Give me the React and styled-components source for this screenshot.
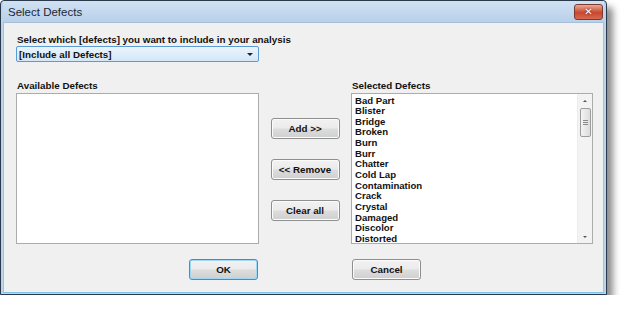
import styled, { createGlobalStyle } from "styled-components";

const GlobalStyle = createGlobalStyle`
  body {
    margin: 0;
    background: #ffffff;
    font-family: "Liberation Sans", Arial, sans-serif;
  }
`;

const Window = styled.div`
  width: 607px;
  height: 295px;
  border: 1px solid #2b3a4a;
  border-radius: 4px 4px 0 0;
  background: #bcd4ec;
  box-shadow: 6px 7px 7px rgba(0, 0, 0, 0.45);
  display: flex;
  flex-direction: column;
  padding: 0 2px 1px 2px;
  box-sizing: border-box;
`;

const TitleBar = styled.div`
  height: 21px;
  display: flex;
  align-items: center;
  justify-content: space-between;
  padding: 0 1px 0 5px;
  background: linear-gradient(#d0e1f3, #b9d0ea);
`;

const Title = styled.span`
  font-family: "Liberation Sans", sans-serif;
  font-size: 11.5px;
  color: #1b2736;
`;

const CloseButton = styled.div`
  width: 27px;
  height: 14px;
  border: 1px solid #7a3a2e;
  border-radius: 3px;
  background: linear-gradient(#eaa998, #c9472f 55%, #d66a50);
  display: flex;
  align-items: center;
  justify-content: center;
  color: #ffffff;
  font-family: "DejaVu Sans", sans-serif;
  font-weight: bold;
  font-size: 10px;
  line-height: 1;
  text-shadow: 0 0 2px #5a1a10;
`;

const Client = styled.div`
  flex: 1;
  background: #f0f0f0;
  border: 1px solid #a8bfd8;
  border-bottom-color: #7fc4e6;
  padding: 11px 10px 0 12px;
  display: grid;
  grid-template-columns: 243px 92px 242px;
  align-content: start;
`;

const Label = styled.div`
  font-family: "Liberation Sans", Arial, sans-serif;
  font-weight: bold;
  font-size: 9.8px;
  color: #111;
  line-height: 11px;
  margin-left: ${(p) => p.$indent || 0}px;
`;

const Heading = styled(Label)`
  grid-column: 1 / 4;
`;

const Combo = styled.div`
  grid-column: 1 / 2;
  margin-top: 1px;
  height: 16px;
  border: 1px solid #5a9bd5;
  border-radius: 2px;
  background: linear-gradient(#eaf4fc, #d4e7f8);
  display: flex;
  align-items: center;
  justify-content: space-between;
  padding: 0 5px 0 2px;
  box-sizing: border-box;
`;

const ComboText = styled.span`
  font-family: "Liberation Sans", Arial, sans-serif;
  font-weight: bold;
  font-size: 9.8px;
  color: #111;
`;

const Arrow = styled.span`
  width: 0;
  height: 0;
  border-left: 3px solid transparent;
  border-right: 3px solid transparent;
  border-top: 3px solid #222;
`;

const ListLabelRow = styled.div`
  grid-column: 1 / 4;
  display: grid;
  grid-template-columns: 335px 1fr;
  margin-top: 18px;
  margin-bottom: 2px;
`;

const ListBox = styled.div`
  height: 151px;
  border: 1px solid #acacac;
  background: #ffffff;
  box-sizing: border-box;
  display: flex;
`;

const Items = styled.div`
  flex: 1;
  padding: 1.5px 3px 0 3px;
  overflow: hidden;
`;

const Item = styled.div`
  font-family: "Liberation Sans", Arial, sans-serif;
  font-weight: bold;
  font-size: 9.6px;
  line-height: 10.65px;
  color: #111;
`;

const ScrollBar = styled.div`
  width: 14px;
  display: flex;
  flex-direction: column;
  align-items: center;
  background: #f3f3f3;
  border-left: 1px solid #ececec;
`;

const ScrollArrow = styled.div`
  height: 13px;
  display: flex;
  align-items: center;
  justify-content: center;
  &::after {
    content: "";
    border-left: 2px solid transparent;
    border-right: 2px solid transparent;
    ${(p) =>
      p.$up ? "border-bottom: 2px solid #555;" : "border-top: 2px solid #555;"}
  }
`;

const Thumb = styled.div`
  width: 11px;
  height: 29px;
  margin-top: 1px;
  border: 1px solid #9c9c9c;
  border-radius: 2px;
  background: linear-gradient(90deg, #f4f4f4, #dcdcdc);
  box-sizing: border-box;
  display: flex;
  flex-direction: column;
  align-items: center;
  justify-content: center;
  gap: 1px;
`;

const Grip = styled.span`
  width: 5px;
  height: 1px;
  background: #8a8a8a;
`;

const Spacer = styled.div`
  flex: 1;
`;

const Middle = styled.div`
  display: flex;
  flex-direction: column;
  align-items: center;
  padding-top: 25px;
  gap: 20px;
`;

const Button = styled.div`
  width: 69px;
  height: 21px;
  border: 1px solid ${(p) => (p.$default ? "#3c8fd0" : "#8e8f8f")};
  border-radius: 3px;
  background: linear-gradient(#f2f2f2 0%, #ebebeb 48%, #dddddd 52%, #cfcfcf 100%);
  box-shadow: inset 0 0 0 1px ${(p) => (p.$default ? "#9ed8f6" : "#fbfbfb")};
  box-sizing: border-box;
  display: flex;
  align-items: center;
  justify-content: center;
  font-family: "Liberation Sans", Arial, sans-serif;
  font-weight: bold;
  font-size: 9.8px;
  color: #111;
`;

const Footer = styled.div`
  grid-column: 1 / 4;
  display: grid;
  grid-template-columns: 335px 1fr;
  margin-top: 15px;
`;

const FooterCell = styled.div`
  display: flex;
  justify-content: ${(p) => p.$justify || "flex-start"};
  padding-left: ${(p) => p.$pad || 0}px;
  padding-right: ${(p) => p.$padRight || 0}px;
`;

const selected = [
  "Bad Part",
  "Blister",
  "Bridge",
  "Broken",
  "Burn",
  "Burr",
  "Chatter",
  "Cold Lap",
  "Contamination",
  "Crack",
  "Crystal",
  "Damaged",
  "Discolor",
  "Distorted",
];

export default function App() {
  return (
    <>
      <GlobalStyle />
      <Window>
        <TitleBar>
          <Title>Select Defects</Title>
          <CloseButton>✕</CloseButton>
        </TitleBar>
        <Client>
          <Heading $indent={1}>
            Select which [defects] you want to include in your analysis
          </Heading>
          <Combo>
            <ComboText>[Include all Defects]</ComboText>
            <Arrow />
          </Combo>
          <ListLabelRow>
            <Label $indent={1}>Available Defects</Label>
            <Label $indent={1}>Selected Defects</Label>
          </ListLabelRow>
          <ListBox />
          <Middle>
            <Button>Add &gt;&gt;</Button>
            <Button>&lt;&lt; Remove</Button>
            <Button>Clear all</Button>
          </Middle>
          <ListBox>
            <Items>
              {selected.map((name) => (
                <Item key={name}>{name}</Item>
              ))}
            </Items>
            <ScrollBar>
              <ScrollArrow $up />
              <Thumb>
                <Grip />
                <Grip />
                <Grip />
              </Thumb>
              <Spacer />
              <ScrollArrow />
            </ScrollBar>
          </ListBox>
          <Footer>
            <FooterCell $justify="flex-end" $padRight={93}>
              <Button $default>OK</Button>
            </FooterCell>
            <FooterCell $pad={1}>
              <Button>Cancel</Button>
            </FooterCell>
          </Footer>
        </Client>
      </Window>
    </>
  );
}
